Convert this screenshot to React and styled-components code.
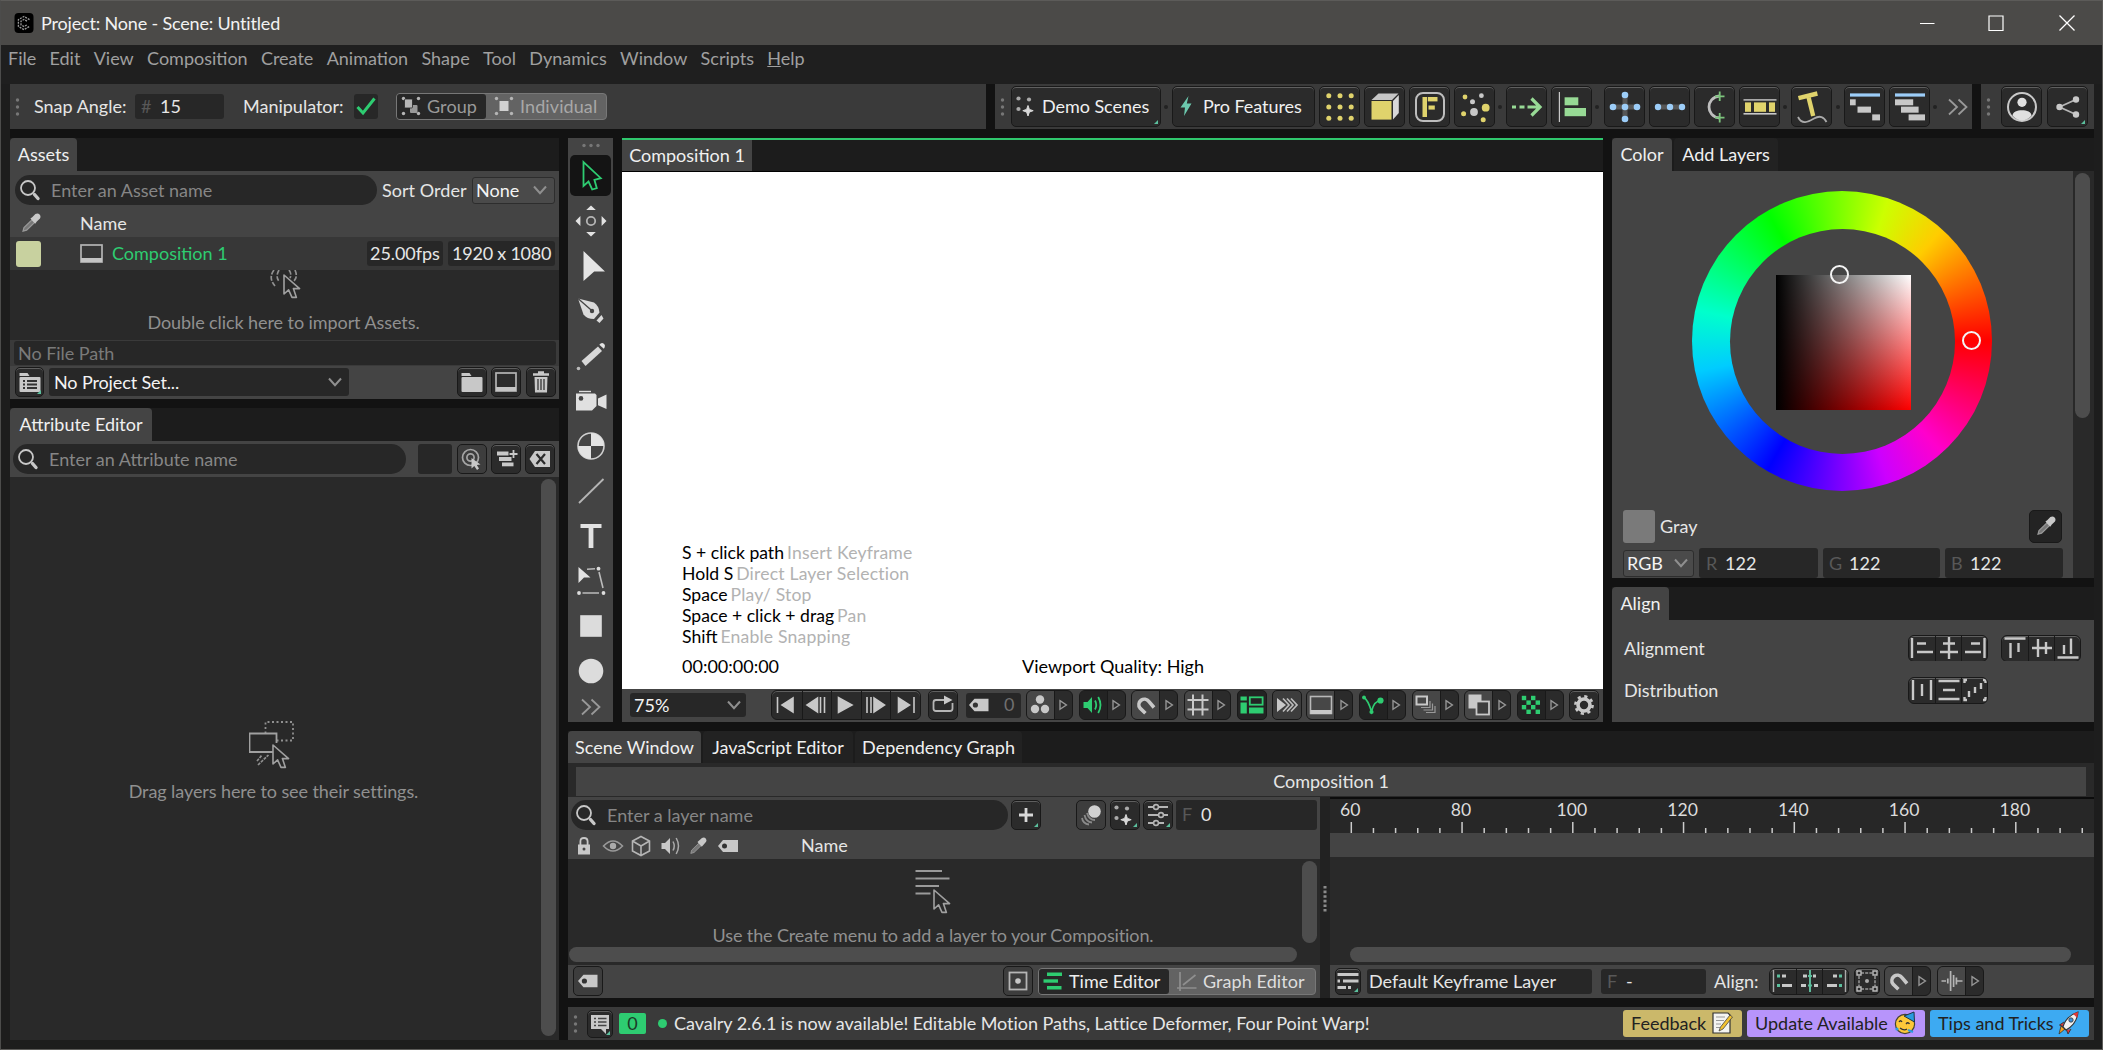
import React from "react";
import styled, { createGlobalStyle, css } from "styled-components";

const GlobalStyle = createGlobalStyle`
  * { box-sizing: border-box; }

  body {
    margin: 0;
    background: #1d1d1d;
    font-family: Lato, "Liberation Sans", sans-serif;
    font-size: 18px;
    line-height: 22px;
    color: #e6e6e6;
    overflow: hidden;
  }

  svg { display: block; flex: none; }
`;

/* ---------- frame ---------- */

const Window = styled.div`
  width: 2103px;
  height: 1050px;
  display: flex;
  flex-direction: column;
  background: #1d1d1d;
  border: 1px solid #5c5b59;
  border-left-color: #4c4c4b;
`;

const TitleBar = styled.header`
  height: 44px;
  flex: none;
  display: flex;
  align-items: center;
  padding: 0 26px 0 13px;
  background: #4b4a48;
`;

const MenuBar = styled.nav`
  height: 39px;
  flex: none;
  display: flex;
  gap: 13.3px;
  padding: 2px 0 0 7px;
  background: #1f1f1f;
  color: #a0a0a0;
`;

const Workspace = styled.main`
  width: 2084px;
  margin-left: 9px;
  height: 956px;
  display: flex;
  flex-direction: column;
  gap: 9px;
  background: #121212;
`;

const Columns = styled.div`
  display: flex;
  gap: 9px;
`;

const Stack = styled.div`
  width: ${p => p.$w}px;
  flex: none;
  display: flex;
  flex-direction: column;
  gap: ${p => p.$gap || 0}px;
`;

const Panel = styled.section`
  width: ${p => p.$w}px;
  height: ${p => p.$h}px;
  flex: none;
  display: flex;
  flex-direction: column;
  overflow: hidden;
  background: ${p => p.$bg || "#444"};
`;

const TabBar = styled.div`
  height: ${p => p.$h || 33}px;
  flex: none;
  display: flex;
  gap: 2px;
  background: #1c1c1c;
  border-top: ${p => (p.$accent ? "2px solid #2fc76d" : "none")};
`;

const Tab = styled.div`
  width: ${p => p.$w}px;
  padding-top: ${p => p.$pt ?? 5}px;
  text-align: center;
  white-space: nowrap;
  border-radius: ${p => (p.$square ? 0 : "4px 4px 0 0")};
  color: #f0f0f0;
  background: ${p => (p.$on ? "#444" : "#222")};
`;

const Bar = styled.div`
  height: ${p => p.$h}px;
  flex: none;
  display: flex;
  align-items: center;
  padding-left: ${p => p.$pl || 0}px;
  padding-bottom: ${p => p.$pb || 0}px;
  background: ${p => p.$bg || "#444"};
`;

/* ---------- controls ---------- */

const Label = styled.span`
  flex: none;
  width: ${p => (p.$w ? `${p.$w}px` : "auto")};
  margin-left: ${p => p.$ml || 0}px;
  padding-bottom: 1px;
  color: ${p => p.$c || "#e6e6e6"};
  letter-spacing: ${p => p.$ls || 0}px;
  white-space: nowrap;
`;

const Button = styled.div`
  position: relative;
  width: ${p => p.$w || 30}px;
  height: ${p => p.$h || 30}px;
  margin-left: ${p => p.$ml || 0}px;
  flex: none;
  display: flex;
  align-items: center;
  justify-content: center;
  border: 1px solid #191919;
  border-radius: 5px;
  background: ${p => (p.$flat ? "#3d3d3d" : p.$dark ? "#232323" : "#2b2b2b")};
  box-shadow: ${p => (p.$flat || p.$dark ? "none" : "inset 0 1px 0 #5f5f5f")};
  overflow: hidden;

  ${p =>
    p.$menu &&
    css`
      &:after {
        content: "";
        position: absolute;
        right: 2px;
        bottom: 2px;
        border: 2.5px solid transparent;
        border-right-color: #5bbf9d;
        border-bottom-color: #5bbf9d;
      }
    `}
`;

const TextButton = styled(Button)`
  justify-content: flex-start;
  padding: 0 0 1px 3px;
  color: #f0f0f0;
  gap: ${p => p.$gap || 4}px;
  letter-spacing: -0.05px;
  white-space: nowrap;
`;

const Joined = styled.div`
  height: ${p => p.$h || 30}px;
  margin-left: ${p => p.$ml || 0}px;
  flex: none;
  display: flex;
  border: 1px solid #191919;
  border-radius: 6px;
  background: #2b2b2b;
  box-shadow: ${p => (p.$lit ? "inset 0 1px 0 #5f5f5f" : "none")};
  overflow: hidden;
`;

const Cell = styled.div`
  width: ${p => p.$w}px;
  display: flex;
  align-items: center;
  justify-content: center;
  background: ${p => p.$bg || "transparent"};

  & + & { border-left: 1px solid #191919; }
`;

const Field = styled.div`
  width: ${p => p.$w}px;
  height: ${p => p.$h || 25}px;
  margin-left: ${p => p.$ml || 0}px;
  padding-left: ${p => p.$pl || 0}px;
  padding-bottom: 1px;
  flex: none;
  display: flex;
  align-items: center;
  border-radius: 3px;
  background: #272727;
  color: ${p => p.$c || "#e6e6e6"};
  letter-spacing: ${p => p.$ls || 0}px;
`;

const Hint = styled.span`
  width: ${p => p.$w || 19}px;
  color: #585858;
`;

const Combo = styled(Field)`
  justify-content: space-between;
  padding-right: ${p => p.$pr || 6}px;
  color: #f4f4f4;
  background: ${p => (p.$raised ? "#4a4a4a" : "#272727")};
  border: ${p => (p.$raised ? "1px solid #2d2d2d" : "none")};
`;

const Search = styled.div`
  width: ${p => p.$w}px;
  height: 30px;
  margin-left: ${p => p.$ml}px;
  flex: none;
  display: flex;
  align-items: center;
  gap: 10px;
  padding-left: 4px;
  border-radius: 15px;
  background: #272727;
  color: #868686;
`;

const Segmented = styled.div`
  width: ${p => p.$w}px;
  height: 27px;
  margin-left: ${p => p.$ml}px;
  flex: none;
  display: flex;
  border: 1px solid #777;
  border-radius: 4px;
  background: #636363;
`;

const Segment = styled.div`
  width: ${p => p.$w}px;
  display: flex;
  align-items: center;
  gap: 6px;
  padding-left: ${p => p.$pl || 4}px;
  padding-bottom: 1px;
  border-radius: 3px;
  letter-spacing: ${p => p.$ls || 0}px;
  white-space: nowrap;
  color: ${p => p.$c};
  background: ${p => (p.$on ? "#272727" : "transparent")};
`;

const Swatch = styled.div`
  width: ${p => p.$w}px;
  height: ${p => p.$h}px;
  flex: none;
  border-radius: 3px;
  background: ${p => p.$c};
`;

const Dot = styled.div`
  width: 4px;
  height: 4px;
  flex: none;
  margin-left: ${p => p.$ml ?? 3}px;
  margin-right: ${p => p.$mr ?? 4}px;
  border-radius: 2px;
  background: #222;
`;

const Chip = styled.div`
  width: ${p => p.$w}px;
  height: 27px;
  margin-left: ${p => p.$ml || 0}px;
  display: flex;
  align-items: center;
  justify-content: space-between;
  padding: 0 9px 1px 8px;
  border-radius: 3px;
  background: ${p => p.$c};
  color: #222;
  white-space: nowrap;
`;

const Thumb = styled.div`
  width: ${p => p.$w}px;
  height: ${p => p.$h}px;
  margin: ${p => p.$m || 0};
  flex: none;
  border-radius: 8px;
  background: #4d4d4d;
`;

const Empty = styled.div`
  height: ${p => p.$h}px;
  padding-top: ${p => p.$pt || 0}px;
  padding-right: ${p => p.$pr || 0}px;
  flex: 1;
  display: flex;
  flex-direction: column;
  align-items: center;
  gap: ${p => p.$gap}px;
  color: #909090;
  letter-spacing: ${p => p.$ls || -0.08}px;
  white-space: nowrap;
`;

/* ---------- icons, all drawn around 0,0 ---------- */

const Glyph = ({ w = 24, h = w, children, ...rest }) => (
  <svg
    width={w}
    height={h}
    viewBox={`${-w / 2} ${-h / 2} ${w} ${h}`}
    fill="none"
    {...rest}
  >
    {children}
  </svg>
);

const G = "#c8c8c8";
const Y = "#e0d36c";
const B = "#9ccdf8";
const GREEN = "#2ecc71";
const LIME = "#97da95";

const Rects = ({ list, fill = G }) =>
  list.map(([x1, y1, x2, y2], i) => (
    <rect key={i} x={x1} y={y1} width={x2 - x1} height={y2 - y1} fill={fill} />
  ));

const Dots = ({ list, fill = G }) =>
  list.map(([cx, cy, r], i) => (
    <circle key={i} cx={cx} cy={cy} r={r} fill={fill} />
  ));

const Grip = ({ across }) => (
  <Glyph w={across ? 22 : 5} h={across ? 5 : 22}>
    <Dots
      fill="#777"
      list={across ? [[-7, 0, 1.7], [0, 0, 1.7], [7, 0, 1.7]] : [[0, -7, 1.7], [0, 0, 1.7], [0, 7, 1.7]]}
    />
  </Glyph>
);

const Chevron = ({ c = "#8f8f8f" }) => (
  <Glyph w={16} h={12}>
    <path d="M-6 -3.5L0 3.2L6 -3.5" stroke={c} strokeWidth="2" />
  </Glyph>
);

const More = () => (
  <Glyph w={22} h={20}>
    <path d="M-9 -7.5L-1 0L-9 7.5M0.5 -7.5L8.5 0L0.5 7.5" stroke="#999" strokeWidth="1.8" />
  </Glyph>
);

const Lens = () => (
  <Glyph w={22}>
    <circle cx="-2" cy="-2" r="7" stroke={G} strokeWidth="1.8" />
    <path d="M4.5 4.5L8 8.5" stroke={G} strokeWidth="3.4" strokeLinecap="round" />
  </Glyph>
);

const Dropper = () => (
  <Glyph w={20}>
    <path d="M-8 8.2L-7 4.6L1 -3.2L3.6 -.6L-4.4 7.2Z" fill="#777" stroke="#999" strokeWidth="1.2" />
    <path d="M-.6 -4.4L1.2 -5.8L4.4 -9Q7 -10.2 8.6 -8.4T9 -4.6L5.8 -1.4L4.2 .8Z" fill={G} />
  </Glyph>
);

const Monitor = ({ w = 24, h = 20 }) => (
  <Glyph w={w} h={h}>
    <rect x={-w / 2 + 1} y={-h / 2 + 1} width={w - 2} height={h - 2} stroke="#b4b4b4" strokeWidth="1.7" />
    <rect x={-w / 2 + 1} y={h / 2 - 5} width={w - 2} height="4" fill="#c4c4c4" />
  </Glyph>
);

const Tag = ({ w = 22 }) => (
  <Glyph w={w} h={14}>
    <path d="M-10 0L-4.5 -6.3H9.5V6.3H-4.5Z" fill={G} />
    <circle cx="-3.6" cy="0" r="2.6" fill="#333" />
  </Glyph>
);

const Play = () => (
  <Glyph w={10} h={12}>
    <path d="M-3 -4.3L3.4 0L-3 4.3Z" stroke="#959595" strokeWidth="1.4" />
  </Glyph>
);

const Folder = ({ lined }) => (
  <Glyph w={24}>
    <path d="M-10.5 -9H-2.5L-.5 -6H-10.5Z" fill={G} />
    <rect x="-10.5" y="-5" width="21" height="15" rx="1" fill={G} />
    {lined && (
      <path d="M-7 -1H-5M-3 -1H7M-7 2.5H-5M-3 2.5H7M-7 6H-5M-3 6H7" stroke="#333" strokeWidth="1.8" />
    )}
  </Glyph>
);

const Sparkles = () => (
  <Glyph w={24}>
    <Dots list={[[-8.5, -7.5, 2.1], [2, -6.5, 2.1], [-8.5, 3, 2.1]]} fill="#aaa" />
    <path d="M1 -.5L2.4 3.4L6.2 4.7L2.4 6L1 10L-.4 6L-4.2 4.7L-.4 3.4Z" fill="#d8d8d8" stroke="#d8d8d8" />
  </Glyph>
);

const Cursor = ({ c = "#a0a0a0", sw = 1.6 }) => (
  <path
    d="M0 0V19L4.6 14.8L8 22.4H12.4L9.4 13.6H15.6Z"
    stroke={c}
    strokeWidth={sw}
    fill="#292929"
    strokeLinejoin="round"
  />
);

const AppLogo = () => (
  <Glyph w={20}>
    <rect x="-9.5" y="-10" width="19" height="20" rx="4" fill="#000" />
    <path d="M5.5 -3.4L0 -6.6L-5.6 -3.4V3.4L0 6.6L5.5 3.4M3 -1.9L0 -3.5L-3 -1.8V1.8L0 3.5L3 1.9" stroke="#9a9a9a" strokeWidth="1.3" strokeDasharray="2 1" />
  </Glyph>
);

const GroupIcon = ({ single }) => (
  <Glyph w={20}>
    <Dots fill="#b5b5b5" list={[[-7.5, -7.5, 1.7], [7.5, -7.5, 1.7], [-7.5, 7.5, 1.7], [7.5, 7.5, 1.7]]} />
    {single ? (
      <Rects fill="#d0d0d0" list={[[-4.5, -5, 4.5, 5]]} />
    ) : (
      <>
        <rect x="-1" y="-1" width="7.5" height="8" rx="1" fill="#999" />
        <rect x="-6.5" y="-7" width="8" height="9" rx="1" fill="#b5b5b5" stroke="#272727" strokeWidth=".8" />
      </>
    )}
  </Glyph>
);

/* main toolbar drawings */
const toolbarIcons = {
  grid: (
    <Dots
      fill={Y}
      list={[-11.2, 0, 11.2].flatMap(x => [-11.2, 0, 11.2].map(y => [x, y, 2.5]))}
    />
  ),
  cube: (
    <>
      <path d="M-13.5 -7L-6.5 -13.5H13.5L7 -7Z" fill="#c6c6c6" />
      <path d="M8 -6L13.8 -12V6L8 12.6Z" fill="#d8d8d8" />
      <Rects fill={Y} list={[[-13.5, -6, 6.5, 12.6]]} />
    </>
  ),
  frame: (
    <>
      <rect x="-14" y="-14" width="28" height="28" rx="7" stroke="#bdbdbd" strokeWidth="2" />
      <Rects fill={Y} list={[[-7.5, -10, -3, 10], [-2.2, -10, 7.5, -5.6], [-1.5, -1.5, 4.8, 2.6]]} />
    </>
  ),
  particles: (
    <>
      <Dots fill={Y} list={[[-10, -10, 2.4], [10.7, 0.7, 3.9], [-11.4, 6.7, 2.5], [8.2, 12.7, 2.5]]} />
      <Dots list={[[6.4, -11.3, 2.4], [-2.5, -5.3, 2.5], [-1, 5, 3.9]]} />
    </>
  ),
  arrow: (
    <path d="M-15 0H-11M-7.5 0H-2.5M.5 0H13M4.5 -8.5L13 0L4.5 8.5" stroke={LIME} strokeWidth="3.2" />
  ),
  align: (
    <>
      <Rects list={[[-13.2, -15, -12, 15]]} />
      <Rects fill={LIME} list={[[-7.4, -9.7, 6.3, -1.7], [-7.4, 1, 14, 9.2]]} />
    </>
  ),
  cross: (
    <>
      <Rects fill="#565656" list={[[-12, -2.5, 12, 2.5], [-2.5, -12, 2.5, 12]]} />
      <Dots fill={B} list={[[-12, 0, 3.3], [0, 0, 3.3], [12, 0, 3.3], [0, -12, 3.3], [0, 12, 3.3]]} />
    </>
  ),
  row: (
    <>
      <Rects fill="#565656" list={[[-12, -2.5, 12, 2.5]]} />
      <Dots fill={B} list={[[-12, 0, 3.2], [0, 0, 3.2], [12, 0, 3.2]]} />
    </>
  ),
  arc: (
    <>
      <path d="M4.5 -11C-9.5 -9.5 -9.5 9.5 4.5 11" stroke="#bdbdbd" strokeWidth="2.8" />
      <path d="M4.7 -15.5V-6M0 -10.7H9.5M4.7 15.5V6M0 10.7H9.5" stroke="#7cc47c" strokeWidth="1.8" />
    </>
  ),
  film: (
    <>
      <Rects list={[[-16.5, -7.8, 16.5, -6.4], [-16.5, 6, 16.5, 7.6]]} />
      <Rects fill={Y} list={[[-15, -4.6, -9, 4.8], [-6, -4.6, 6, 4.8], [9, -4.6, 15, 4.8]]} />
    </>
  ),
  textPath: (
    <>
      <g transform="rotate(-14)">
        <Rects fill={Y} list={[[-11, -14, 8.5, -9.6], [-3.2, -10, 1.2, 9]]} />
      </g>
      <path d="M-14 10C-10 18 -4 15 2 11.5S12 10 14.5 15" stroke="#aaa" strokeWidth="1.8" />
    </>
  ),
  stagger: (
    <>
      <Rects fill={B} list={[[-15, -13.6, 15, -10.4]]} />
      <Rects list={[[-15, -7.7, -9.3, -1.7], [-7.5, -.4, 6, 5.7], [7.2, 7.4, 15, 13.4]]} />
    </>
  ),
  cascade: (
    <>
      <Rects fill={B} list={[[-15, -13.6, 15, -10.4]]} />
      <Rects list={[[-15, -7.7, 3.2, -1.7], [-9, -.4, 8.6, 5.7], [-1.4, 7.4, 15, 13.4]]} />
    </>
  ),
  person: (
    <>
      <circle r="14" stroke={G} strokeWidth="2" />
      <circle cy="-4.7" r="4.6" fill="#e0e0e0" />
      <path d="M-9.5 8.7C-9.5 1.5 9.5 1.5 9.5 8.7Q5 13.5 0 13.5T-9.5 8.7Z" fill="#e0e0e0" />
    </>
  ),
  share: (
    <>
      <path d="M8 -7.5L-8.5 0L8 7.5" stroke="#b5b5b5" strokeWidth="1.8" />
      <Dots list={[[8, -7.5, 3.2], [-8.5, 0, 3.2], [8, 7.5, 3.2]]} />
    </>
  )
};

const ToolbarButton = ({ name, ml, menu }) => (
  <Button $w={41} $h={41} $ml={ml} $menu={menu}>
    <Glyph w={38}>{toolbarIcons[name]}</Glyph>
  </Button>
);

/* left strip of drawing tools */
const toolIcons = [
  <path d="M-7.5 -14V10L-2.5 5.5L1.2 13.5L5.8 12.2L3.4 3.8L9.8 2.2Z" stroke={GREEN} strokeWidth="1.8" />,
  <>
    <circle r="4.2" stroke="#b5b5b5" strokeWidth="1.8" />
    <path d="M0 -15.5L4.8 -11H-4.8ZM0 15.5L4.8 11H-4.8ZM-15.5 0L-10.6 -5V5ZM15.5 0L10.6 -5V5Z" fill="#e2e2e2" />
  </>,
  <path d="M-7.5 -15L14 5.5H3.2L-7.5 15Z" fill="#e4e4e4" />,
  <>
    <path d="M-13 -12.5L3 -8.5Q8 -5 8.5 1.5L3 8Q-4 8 -7.5 3.5Z" fill="#dadada" />
    <path d="M-13 -12.5L1 -.2" stroke="#444" strokeWidth="1.3" />
    <circle cx="1" cy="0" r="2.2" fill="#444" />
    <path d="M5.5 9.5L10.5 4L12.5 7.5L8.5 12Z" fill="#dadada" />
  </>,
  <>
    <path d="M-9.5 5L7 -9.5L11 -5L-5.5 10Z" fill="#d8d8d8" />
    <path d="M8.3 -11.2Q10.5 -14 12.8 -12.3T12.8 -7.2Z" fill="#e4e4e4" />
    <circle cx="-12.5" cy="12.5" r="1.8" fill="#bbb" />
  </>,
  <>
    <Rects fill="#ddd" list={[[-12, -10.2, 0, -8.8]]} />
    <path d="M-15 -7.5H4L5.5 -6V5L1 9.5H-15ZM7 -2.5L15.5 -6.5V8L7 4.2Z" fill="#e0e0e0" />
    <circle cx="-10" cy="-2.6" r="2.3" fill="#444" />
  </>,
  <>
    <circle r="13" stroke="#cfcfcf" strokeWidth="1.6" />
    <path d="M0 0V-13A13 13 0 0 1 13 0ZM0 0V13A13 13 0 0 1 -13 0Z" fill="#e2e2e2" />
  </>,
  <path d="M-12 12L12.5 -12" stroke="#b5b5b5" strokeWidth="1.8" />,
  <Rects fill="#e2e2e2" list={[[-10.5, -12, 10.5, -8], [-2.4, -9, 2.4, 12]]} />,
  <>
    <path d="M-12.5 -14L-.5 -3.5H-7L-12.5 2Z" fill="#e2e2e2" />
    <path d="M-4 -11.8L4 -12.3M8 -9L12 7M-8.5 12H8" stroke="#bbb" strokeWidth="1.6" />
    <Dots fill="#ddd" list={[[7.5, -12.3, 1.9], [-12, 12, 1.9], [12.5, 12, 1.9]]} />
  </>,
  <Rects fill="#dcdcdc" list={[[-10.8, -10.8, 10.8, 10.8]]} />,
  <circle r="12.3" fill="#dcdcdc" />
];

const Strip = styled(Panel)`
  align-items: center;
  padding-top: 5px;
`;

const Tools = styled.div`
  display: flex;
  flex-direction: column;
  align-items: center;
  gap: 4px;
  margin-top: 7px;
`;

const ToolSlot = styled.div`
  width: 41px;
  height: ${p => p.$h || 41}px;
  flex: none;
  display: flex;
  align-items: center;
  justify-content: center;
  border-radius: 5px;
  background: ${p => (p.$on ? "#141414" : "transparent")};
`;

/* ---------- viewport ---------- */

const Canvas = styled.div`
  height: 518px;
  flex: none;
  display: flex;
  flex-direction: column;
  justify-content: flex-end;
  padding: 0 0 12px 60px;
  border-top: 1px solid #000;
  background: #fff;
  color: #000;
  line-height: 21px;
`;

const Shortcut = styled.div`
  font-size: 17.6px;

  span {
    margin-left: 3px;
    color: #b2b2b2;
    letter-spacing: 0.18px;
  }
`;

const CanvasFooter = styled.div`
  display: flex;
  margin-top: 9px;

  & > :first-child { width: 340px; }
`;

const shortcuts = [
  ["S + click path", "Insert Keyframe"],
  ["Hold S", "Direct Layer Selection"],
  ["Space", "Play/ Stop"],
  ["Space + click + drag", "Pan"],
  ["Shift", "Enable Snapping"]
];

const transport = [
  "M-9.5 -8V8M6 -7V7L-5 0Z",
  "M7.5 -8V8M3.5 -8V8M.5 -7V7L-10 0Z",
  "M-7.5 -7.5V7.5L6 0Z",
  "M-9 -8V8M-5 -8V8M-2 -7V7L8.5 0Z",
  "M8 -8V8M-7.5 -7V7L3.5 0Z"
];

const viewIcons = {
  balls: <Dots list={[[0, -5.5, 4.2], [-5, 4, 4.2], [5, 4, 4.2]]} />,
  volume: (
    <>
      <path d="M-9.5 -3H-5.5L-1 -8V8L-5.5 3H-9.5Z" fill={GREEN} />
      <path d="M2 -4.5Q4.5 0 2 4.5M5.2 -8Q9.8 0 5.2 8" stroke={GREEN} strokeWidth="1.8" />
    </>
  ),
  magnet: <path d="M8 2.5L2.8 -3.6A5.4 5.4 0 0 0 -6 3L-.6 8.2" stroke={G} strokeWidth="3.6" />,
  grid: <path d="M-5 -10.5V10.5M4.5 -10.5V10.5M-10.5 -5H10.5M-10.5 4.5H10.5" stroke={G} strokeWidth="2" />,
  monitor: (
    <>
      <rect x="-10.5" y="-8.5" width="21" height="17" stroke="#b8b8b8" strokeWidth="1.6" />
      <Rects list={[[-10.5, 5, 10.5, 9]]} />
    </>
  ),
  path: (
    <>
      <path d="M-9 -7.5Q-5 -5 -1.5 6.5Q1 -4.5 9 -5" stroke={GREEN} strokeWidth="1.7" />
      <Dots fill={GREEN} list={[[-9, -7.5, 1.9], [7.5, -4.5, 3.1], [-1.5, 7, 2.1]]} />
    </>
  ),
  layers: (
    <>
      <rect x="-9.5" y="-8.5" width="10.5" height="8" stroke={G} strokeWidth="2" />
      <path d="M4 -4V2.5H-5M6.5 -1.5V5H-2.5M9 1V7.5H0" stroke="#999" strokeWidth="1.2" />
    </>
  ),
  overlap: (
    <>
      <Rects list={[[-10.5, -10.5, 2.5, 3.5]]} />
      <rect x="-2.5" y="-3.5" width="12.5" height="13" fill="#3d3d3d" stroke={G} strokeWidth="1.8" />
    </>
  ),
  checker: (
    <Rects
      fill={GREEN}
      list={[0, 1, 2, 3].flatMap(r =>
        [0, 1, 2, 3].filter(c => (r + c) % 2 === 0).map(c => [c * 4.6 - 9.2, r * 4.6 - 9.2, c * 4.6 - 4.8, r * 4.6 - 4.8])
      )}
    />
  ),
  wave: <path d="M-10.5 0H-6M-4.2 -2.5V2.5M-1.4 -10V10M1.6 -6V6M4.4 -3.5V3.5M5 0H10.5" stroke="#b5b5b5" strokeWidth="1.7" />
};

const Split = ({ icon, ml = 5.6, dark }) => (
  <Joined $ml={ml}>
    <Cell $w={27} $bg={dark ? "#232323" : "#474747"}>
      <Glyph w={24}>{viewIcons[icon]}</Glyph>
    </Cell>
    <Cell $w={18}>
      <Play />
    </Cell>
  </Joined>
);

/* ---------- colour wheel ---------- */

const hues = Array.from({ length: 16 }, (_, i) => `hsl(${360 - i * 24}, 100%, 50%)`);

const WheelArea = styled.div`
  height: 320px;
  padding: 20px 0 0 80px;
`;

const Wheel = styled.div`
  position: relative;
  width: 300px;
  height: 300px;
  display: grid;
  place-items: center;
  border-radius: 50%;
  background: conic-gradient(from 90deg, ${hues.join(", ")});
`;

const WheelHole = styled.div`
  width: 225px;
  height: 225px;
  display: grid;
  place-items: center;
  padding: 2px 0 0 2px;
  border-radius: 50%;
  background: #444;
`;

const ValueSquare = styled.div`
  width: 135px;
  height: 135px;
  background: linear-gradient(to right, #000, transparent), linear-gradient(#fff, #f00);
`;

const Marker = styled.div`
  position: absolute;
  left: ${p => p.$x}px;
  top: ${p => p.$y}px;
  width: 19px;
  height: 19px;
  border: 2px solid #f4f4f4;
  border-radius: 50%;
`;

const alignGlyphs = [
  "M-10 -10V10M-5 -4.5H4M-5 4H11",
  "M0 -11V11M-6 -4.5H6M-9 4H9",
  "M9.5 -10V10M-4 -4.5H5M-10 4H6"
];
const alignGlyphsV = [
  "M-10.5 -9.5H10.5M-4.5 -5V10M3.5 -5V4",
  "M-10 0H10M-4 -9V9M4 -6V6",
  "M-10.5 9.5H10.5M3 -9.5V6M-4 -3V6"
];

const AlignGroup = ({ glyphs, ml }) => (
  <Joined $h={27} $ml={ml} $lit>
    {glyphs.map((d, i) => (
      <Cell key={i} $w={26}>
        <Glyph w={24}>
          <path d={d} stroke={G} strokeWidth="2.4" />
        </Glyph>
      </Cell>
    ))}
  </Joined>
);

/* ---------- timeline ---------- */

const Ruler = styled.div`
  height: 36px;
  flex: none;
  background: #272727;
  border-top: 2px solid #0c0c0c;
`;

const Splitter = styled.div`
  width: 10px;
  display: flex;
  align-items: center;
  justify-content: center;
  padding-top: 2px;
  background: #222;
`;

const TimelineRuler = () => (
  <svg width="764" height="34" viewBox="0 0 764 34">
    {Array.from({ length: 34 }, (_, i) => {
      const x = 21.3 + i * 22.15;
      const major = i % 5 === 0;
      return (
        <React.Fragment key={i}>
          <path d={`M${x} ${major ? 23 : 29}V35`} stroke="#ccc" strokeWidth="1.5" />
          {major && i < 31 && (
            <text x={x - 1} y="16.5" fill="#dcdcdc" fontSize="17.6" textAnchor="middle">
              {60 + i * 4}
            </text>
          )}
        </React.Fragment>
      );
    })}
  </svg>
);

const Badge = styled.div`
  width: 27px;
  height: 21px;
  margin-left: 6px;
  text-align: center;
  line-height: 20px;
  border-radius: 2px;
  background: #2ecc71;
  color: #1c3a28;
`;

const Bullet = styled.div`
  width: 9px;
  height: 9px;
  margin-left: 12px;
  border-radius: 50%;
  background: #2ecc71;
`;

const Right = styled.div`
  margin-left: auto;
  padding-right: ${p => p.$pr || 0}px;
  display: flex;
  align-items: center;
`;

/* ---------- sections ---------- */

const menus = ["File", "Edit", "View", "Composition", "Create", "Animation", "Shape", "Tool", "Dynamics", "Window", "Scripts"];

const TopBar = () => (
  <>
    <TitleBar>
      <AppLogo />
      <Label $ml={7} $ls={-0.17} $c="#f2f2f2">Project: None - Scene: Untitled</Label>
      <Right>
        <Glyph w={160} h={20}>
          <path d="M-76 .5H-61.5M-7 -7H7V7.5H-7Z" stroke="#fff" strokeWidth="1.2" />
          <path d="M63.5 -7.5L78.5 7.5M78.5 -7.5L63.5 7.5" stroke="#fff" strokeWidth="1.3" />
        </Glyph>
      </Right>
    </TitleBar>
    <MenuBar>
      {menus.map(m => (
        <span key={m}>{m}</span>
      ))}
      <span><u>H</u>elp</span>
    </MenuBar>
  </>
);

const ToolRow = () => (
  <Columns>
    <Panel $w={976} $h={45} $bg="#3a3a3a">
      <Bar $h={45} $pl={5} $bg="#3a3a3a">
        <Grip />
        <Label $ml={14} $w={101}>Snap Angle:</Label>
        <Field $w={89} $pl={6}>
          <Hint>#</Hint>15
        </Field>
        <Label $ml={19} $w={111}>Manipulator:</Label>
        <Field $w={24}>
          <Glyph w={24}>
            <path d="M-8.5 1L-3 7L8.5 -7.5" stroke={GREEN} strokeWidth="3" />
          </Glyph>
        </Field>
        <Segmented $ml={18} $w={211}>
          <Segment $w={89} $on $c="#9a9a9a" $ls={0.1}><GroupIcon />Group</Segment>
          <Segment $pl={8} $c="#a8a8a8" $ls={0.1}><GroupIcon single />Individual</Segment>
        </Segmented>
      </Bar>
    </Panel>
    <Panel $w={977} $h={45} $bg="#3a3a3a">
      <Bar $h={45} $pl={5} $bg="#3a3a3a">
        <Grip />
        <TextButton $w={150} $h={41} $ml={6} $menu $gap={3}><Sparkles />Demo Scenes</TextButton>
        <Dot />
        <TextButton $w={143} $h={41} $gap={7}>
          <Glyph w={20} h={24}>
            <path d="M2.5 -10L-5.5 1.5H-1L-2 10L5.5 -2.5H.8Z" fill="#6cc9ae" />
          </Glyph>
          Pro Features
        </TextButton>
        <ToolbarButton name="grid" ml={4} />
        <ToolbarButton name="cube" ml={4} />
        <ToolbarButton name="frame" ml={4} />
        <ToolbarButton name="particles" ml={4} />
        <Dot />
        <ToolbarButton name="arrow" />
        <ToolbarButton name="align" ml={4} />
        <Dot />
        <ToolbarButton name="cross" ml={1} />
        <ToolbarButton name="row" ml={4} />
        <ToolbarButton name="arc" ml={4} />
        <ToolbarButton name="film" ml={4} />
        <Dot />
        <ToolbarButton name="textPath" />
        <Dot $ml={4} />
        <ToolbarButton name="stagger" />
        <ToolbarButton name="cascade" ml={4} />
        <Dot $mr={10} />
        <More />
      </Bar>
    </Panel>
    <Panel $w={113} $h={45} $bg="#3a3a3a">
      <Bar $h={45} $pl={5} $bg="#3a3a3a">
        <Grip />
        <ToolbarButton name="person" ml={10} />
        <ToolbarButton name="share" ml={5} menu />
      </Bar>
    </Panel>
  </Columns>
);

const Assets = () => (
  <Panel $w={549} $h={261}>
    <TabBar>
      <Tab $w={67} $on>Assets</Tab>
    </TabBar>
    <Bar $h={38}>
      <Search $w={362} $ml={5}><Lens />Enter an Asset name</Search>
      <Label $ml={5} $w={90} $ls={0.05}>Sort Order</Label>
      <Combo $w={83} $h={27} $pl={3} $raised>None<Chevron /></Combo>
    </Bar>
    <Bar $h={28} $pl={11}>
      <Dropper />
      <Label $ml={39}>Name</Label>
    </Bar>
    <Bar $h={33} $pl={6} $bg="#373737">
      <Swatch $w={25} $h={26} $c="#c8d19f" />
      <Label $ml={39}><Monitor w={23} h={19} /></Label>
      <Label $ml={9} $w={255} $c={GREEN}>Composition 1</Label>
      <Field $w={76} $pl={3} $ls={-0.05}>25.00fps</Field>
      <Field $w={107} $pl={4} $ml={5} $ls={-0.22}>1920 x 1080</Field>
    </Bar>
    <Bar $h={70} $bg="#292929">
      <Empty $h={70} $gap={9} $pr={2}>
        <Glyph w={44} h={32}>
          <path d="M-10 -16Q-16 -8 -9 0M-5 -16Q-9 -9 -4.5 -4M5 -16Q8 -12 6 -8M11 -16Q14 -9 10 -5" stroke="#909090" strokeWidth="1.7" strokeDasharray="5 1.5" />
          <g transform="translate(0 -11)"><Cursor /></g>
        </Glyph>
        Double click here to import Assets.
      </Empty>
    </Bar>
    <Bar $h={26} $pl={4} $bg="#3a3a3a">
      <Field $w={542} $h={24} $pl={4} $c="#7a7a7a" $ls={-0.05}>No File Path</Field>
    </Bar>
    <Bar $h={33} $pl={5} $pb={1}>
      <Button $w={29} $menu><Folder lined /></Button>
      <Combo $w={300} $h={28} $ml={5} $pl={5} $ls={-0.12}>No Project Set...<Chevron /></Combo>
      <Button $ml={108}><Folder /></Button>
      <Button $ml={4}><Monitor w={22} h={20} /></Button>
      <Button $ml={5}>
        <Glyph w={24}>
          <path d="M-8 -7.5H8M-3 -9.5H3" stroke={G} strokeWidth="2.4" />
          <path d="M-6.5 -5H6.5L6 10.5H-6Z" fill={G} />
          <path d="M-3 -3V8M0 -3V8M3 -3V8" stroke="#333" strokeWidth="1.3" />
        </Glyph>
      </Button>
    </Bar>
  </Panel>
);

const AttributeEditor = () => (
  <Panel $w={549} $h={632} $bg="#292929">
    <TabBar>
      <Tab $w={142} $on>Attribute Editor</Tab>
    </TabBar>
    <Bar $h={36}>
      <Search $w={393} $ml={3}><Lens />Enter an Attribute name</Search>
      <Field $w={34} $h={30} $ml={12} />
      <Button $ml={5} $flat>
        <Glyph w={24}>
          <circle cx="-1.5" cy="-1.5" r="8" stroke="#a5a5a5" strokeWidth="1.7" />
          <circle cx="-1.5" cy="-1.5" r="3.6" stroke="#a5a5a5" strokeWidth="1.7" />
          <path d="M-.5 -1V9.5L2.3 7L5 11L7 9.5L4.8 6L8.5 5.5Z" fill={G} />
        </Glyph>
      </Button>
      <Button $ml={4}>
        <Glyph w={24}>
          <Rects list={[[-9, -7.5, 2.5, -3.5], [-7, -2, 5.5, 2], [-4, 3.5, 7.5, 7.3]]} />
          <path d="M7.5 -9V-1M3.5 -5H11.5" stroke={G} strokeWidth="1.8" />
        </Glyph>
      </Button>
      <Button $ml={4}>
        <Glyph w={24}>
          <path d="M-10.5 0L-5 -8H10V8H-5Z" fill={G} />
          <path d="M-3.5 -5L5 5M5 -5L-3.5 5" stroke="#2b2b2b" strokeWidth="2.2" />
        </Glyph>
      </Button>
    </Bar>
    <Columns>
      <Empty $h={563} $pt={244} $gap={9} $pr={1}>
        <Glyph w={50} h={50}>
          <path d="M-8.5 -12.5V-24H19V-5.5H3" stroke="#909090" strokeWidth="1.8" strokeDasharray="2 2.5" />
          <path d="M0 6H-24.5V-12.5H2.5V-3" stroke="#a0a0a0" strokeWidth="1.8" />
          <path d="M-17 15L-12 9M-16 19L-5.5 9" stroke="#909090" strokeWidth="1.7" strokeDasharray="3 1" />
          <g transform="translate(-1 -1)"><Cursor /></g>
        </Glyph>
        Drag layers here to see their settings.
      </Empty>
      <Thumb $w={15} $h={557} $m="2px 3px 0 -6px" />
    </Columns>
  </Panel>
);

const Viewport = () => (
  <Panel $w={981} $h={584}>
    <TabBar $accent>
      <Tab $w={130} $on $square $pt={4}>Composition 1</Tab>
    </TabBar>
    <Canvas>
      {shortcuts.map(([keys, what]) => (
        <Shortcut key={keys}>{keys}<span>{what}</span></Shortcut>
      ))}
      <CanvasFooter>
        <div>00:00:00:00</div>
        <div>Viewport Quality: High</div>
      </CanvasFooter>
    </Canvas>
    <Bar $h={33} $pb={1}>
      <Combo $w={116} $h={24} $ml={8} $pl={4} $pr={4}>75%<Chevron /></Combo>
      <Joined $ml={25} $lit>
        {transport.map((d, i) => (
          <Cell key={i} $w={29.6}>
            <Glyph w={26}><path d={d} fill={G} stroke={G} strokeWidth="1.6" /></Glyph>
          </Cell>
        ))}
      </Joined>
      <Button $ml={7}>
        <Glyph w={24}>
          <path d="M2 -5H-7Q-9.5 -5 -9.5 -2.5V3.5Q-9.5 6 -7 6H7Q9.5 6 9.5 3.5V-2" stroke="#b5b5b5" strokeWidth="1.8" />
          <path d="M1 -9.5L9.5 -5L1 -.5Z" fill={G} />
        </Glyph>
      </Button>
      <Field $w={55} $ml={8} $pl={2}><Tag /><Label $ml={14} $c="#707070">0</Label></Field>
      <Split icon="balls" ml={5} />
      <Split icon="volume" dark />
      <Split icon="magnet" />
      <Split icon="grid" />
      <Button $ml={6} $dark>
        <Glyph w={26}>
          <Rects fill={GREEN} list={[[-11.5, -8.5, -5.2, -4.5], [-11.5, -2.5, -5.2, 8.5], [-3, 2.5, 11.5, 8.5]]} />
          <rect x="-2.2" y="-7.7" width="12.8" height="7.4" stroke={GREEN} strokeWidth="1.8" />
        </Glyph>
      </Button>
      <Button $ml={5} $flat>
        <Glyph w={24}>
          <path d="M-10 -7V7L-1 0Z" fill={G} />
          <path d="M-4 -6.5L2 0L-4 6.5M0 -6.5L6 0L0 6.5M4 -6.5L10 0L4 6.5" stroke="#bbb" strokeWidth="1.7" />
        </Glyph>
      </Button>
      <Split icon="monitor" ml={4.6} />
      <Split icon="path" dark />
      <Split icon="layers" />
      <Split icon="overlap" />
      <Split icon="checker" dark />
      <Button $ml={5}>
        <Glyph w={24}>
          <circle r="6" stroke={G} strokeWidth="3.6" />
          <circle r="8.6" stroke={G} strokeWidth="2.6" strokeDasharray="3.2 3.55" />
        </Glyph>
      </Button>
    </Bar>
  </Panel>
);

const ColorBody = styled.div`
  display: flex;
`;

const ChannelBar = styled(Bar)`
  margin-top: -13px;
`;

const ColorPanel = () => (
  <Panel $w={482} $h={440}>
    <TabBar>
      <Tab $w={60} $on>Color</Tab>
      <Tab $w={104}>Add Layers</Tab>
    </TabBar>
    <ColorBody>
      <Stack $w={461}>
        <WheelArea>
          <Wheel>
            <WheelHole><ValueSquare /></WheelHole>
            <Marker $x={138} $y={74} />
            <Marker $x={270} $y={140} />
          </Wheel>
        </WheelArea>
        <Bar $h={70} $pl={11}>
          <Swatch $w={32} $h={33} $c="#7a7a7a" />
          <Label $ml={5} $w={369}>Gray</Label>
          <Button $w={33} $h={33} $dark><Dropper /></Button>
        </Bar>
        <ChannelBar $h={30} $pl={11}>
          <Combo $w={71} $h={27} $pl={3} $pr={4} $raised>RGB<Chevron /></Combo>
          <Field $w={119} $h={30} $ml={5} $pl={7}><Hint>R</Hint>122</Field>
          <Field $w={117} $h={30} $ml={5} $pl={6}><Hint $w={20}>G</Hint>122</Field>
          <Field $w={118} $h={30} $ml={5} $pl={6}><Hint>B</Hint>122</Field>
        </ChannelBar>
      </Stack>
      <Panel $w={21} $h={407} $bg="#292929"><Thumb $w={15} $h={245} $m="2px" /></Panel>
    </ColorBody>
  </Panel>
);

const AlignPanel = () => (
  <Panel $w={482} $h={135}>
    <TabBar>
      <Tab $w={57} $on>Align</Tab>
    </TabBar>
    <Bar $h={15} />
    <Bar $h={26} $pl={12}>
      <Label $w={284}>Alignment</Label>
      <AlignGroup glyphs={alignGlyphs} />
      <AlignGroup glyphs={alignGlyphsV} ml={13} />
    </Bar>
    <Bar $h={16} />
    <Bar $h={26} $pl={12}>
      <Label $w={284}>Distribution</Label>
      <AlignGroup
        glyphs={[
          "M-9 -10V10M9 -10V10M0 -6V6",
          "M-10.5 -9H10.5M-10.5 9H10.5M-6 0H6",
          "M-10.5 -7V-10H-8M8 -10H10.5V-7M-10.5 7V10H-8M8 10H10.5V7M-6 1V7M0 -3V3M6 -7V-1"
        ]}
      />
    </Bar>
  </Panel>
);

const columnIcons = (
  <Glyph w={170} h={22}>
    <g transform="translate(-78 0)">
      <rect x="-6" y="-1.5" width="12" height="10" fill={G} />
      <path d="M-3.6 -1V-4.5Q-3.6 -8 0 -8T3.6 -4.5V-1" stroke={G} strokeWidth="1.8" />
      <circle cy="3" r="1.5" fill="#444" />
    </g>
    <g transform="translate(-49 0)">
      <path d="M-9.5 0Q0 -10 9.5 0Q0 10 -9.5 0Z" stroke="#999" strokeWidth="1.6" />
      <circle r="3.2" fill="#aaa" />
    </g>
    <path d="M-21 -9.5L-12.5 -5V5L-21 9.5L-29.5 5V-5ZM-21 0V9.5M-21 0L-29.5 -5M-21 0L-12.5 -5" stroke="#b5b5b5" strokeWidth="1.6" />
    <g transform="translate(9 0)">
      <path d="M-9.5 -3H-6L-1 -8V8L-6 3H-9.5Z" fill={G} />
      <path d="M2 -4.5Q4.5 0 2 4.5M5.2 -8Q9.8 0 5.2 8" stroke="#aaa" strokeWidth="1.5" />
    </g>
    <g transform="translate(36 0) scale(.9)">
      <path d="M-8 8.2L-7 4.6L1 -3.2L3.6 -.6L-4.4 7.2Z" fill="#777" stroke="#999" />
      <path d="M-.6 -4.4L4.4 -9Q7 -10.2 8.6 -8.4T9 -4.6L4.2 .8Z" fill={G} />
    </g>
    <path d="M56 0L61 -6H76V6H61Z" fill={G} />
    <circle cx="62.5" r="2.5" fill="#333" />
  </Glyph>
);

const ListBar = styled(Bar)`
  align-items: flex-start;
`;

const Layers = () => (
  <Stack $w={752}>
    <Bar $h={35}>
      <Search $w={437} $ml={3}><Lens />Enter a layer name</Search>
      <Button $ml={3} $menu>
        <Glyph w={20}><path d="M0 -7V7M-7 0H7" stroke="#d8d8d8" strokeWidth="2.8" /></Glyph>
      </Button>
      <Button $ml={35} $flat>
        <Glyph w={24}>
          <path d="M-9 3Q-8 9 -2 9.5M-6.5 0Q-5 7 1 7.5M-4 -2Q-2 5 4 5" stroke="#8a8a8a" strokeWidth="1.8" />
          <circle cx="3.5" cy="-3.5" r="6.3" fill="#d0d0d0" />
        </Glyph>
      </Button>
      <Button $ml={4} $menu><Sparkles /></Button>
      <Button $ml={3} $menu>
        <Glyph w={24}>
          <path d="M-10 -8H-5M1 -8H10M-10 0H0M6 0H10M-10 8H-5M1 8H6" stroke="#b5b5b5" strokeWidth="1.8" />
          <circle cx="-2" cy="-8" r="2.4" stroke="#b5b5b5" strokeWidth="1.6" />
          <circle cx="3" cy="0" r="2.4" stroke="#b5b5b5" strokeWidth="1.6" />
          <circle cx="-2" cy="8" r="2.4" stroke="#b5b5b5" strokeWidth="1.6" />
        </Glyph>
      </Button>
      <Field $w={141} $h={30} $ml={3} $pl={6}><Hint>F</Hint>0</Field>
    </Bar>
    <Bar $h={27} $pl={9}>
      {columnIcons}
      <Label $ml={54}>Name</Label>
    </Bar>
    <ListBar $h={86} $bg="#292929">
      <Empty $h={86} $pt={10} $gap={7} $pr={4} $ls={-0.12}>
        <Glyph w={36} h={48}>
          <path d="M-17.5 -22H9M-17.5 -7H6M-17.5 -14.5H16.5M-17.5 .5H-2.5" stroke="#9a9a9a" strokeWidth="1.8" />
          <g transform="translate(1 -3)"><Cursor /></g>
        </Glyph>
        Use the Create menu to add a layer to your Composition.
      </Empty>
      <Thumb $w={15} $h={82} $m="2px 3px 0 0" />
    </ListBar>
    <Bar $h={20} $bg="#292929" $pl={1} $pb={2}><Thumb $w={728} $h={15} /></Bar>
    <Bar $h={33} $pl={5} $pb={1}>
      <Button $flat><Tag /></Button>
      <Button $ml={400} $flat>
        <Glyph w={24}>
          <rect x="-8.5" y="-8.5" width="17" height="17" stroke="#b5b5b5" strokeWidth="1.8" />
          <circle r="2.8" fill={G} />
        </Glyph>
      </Button>
      <Segmented $ml={5} $w={278}>
        <Segment $w={130} $on $c="#eee">
          <Glyph w={20}><Rects fill={GREEN} list={[[-6, -8.5, 9, -5], [-9.5, -1.7, 5, 1.7], [-6, 5, 8.5, 8.5]]} /></Glyph>
          Time Editor
        </Segment>
        <Segment $pl={8} $c="#dedede" $ls={0.08}>
          <Glyph w={20}><path d="M-7 -9V10M-10 7H9.5M-4 4L8.5 -6" stroke="#8f8f8f" strokeWidth="1.7" /></Glyph>
          Graph Editor
        </Segment>
      </Segmented>
    </Bar>
  </Stack>
);

const keyAlign = [
  ["M-9.5 -11V11", "M-6 -5H-3M-6 4.5H-3", "M-1 -5H3M-1 4.5H9"],
  ["M0 -11V11", "M0 -11V11M-2 -5H2M-2 4.5H2", "M-7 -5H-3M3 -5H6M-9 4.5H-4M4 4.5H8"],
  ["M9.5 -11V11", "M3 -5H6M3 4.5H6", "M-3 -5H1M-9 4.5H1"]
];

const Timeline = () => (
  <Stack $w={764}>
    <Ruler><TimelineRuler /></Ruler>
    <Bar $h={24} />
    <Bar $h={88} $bg="#292929" />
    <Bar $h={20} $bg="#292929" $pl={20} $pb={2}><Thumb $w={721} $h={15} /></Bar>
    <Bar $h={33} $pl={5} $pb={1}>
      <Button $w={26} $h={27} $menu>
        <Glyph w={24}><path d="M-10.5 -6.5H10.5M-10.5 0H-8M-5 0H10.5M-10.5 6.5H-2M0 6.5H3" stroke={G} strokeWidth="2.8" /></Glyph>
      </Button>
      <Field $w={225} $ml={6} $pl={2}>Default Keyframe Layer</Field>
      <Field $w={105} $ml={9} $pl={6}><Hint>F</Hint>-</Field>
      <Label $ml={8} $w={55}>Align:</Label>
      <Joined $h={27} $lit>
        {keyAlign.map(([line, accent, bars], i) => (
          <Cell key={i} $w={26}>
            <Glyph w={24}>
              <path d={line} stroke="#aaa" strokeWidth="1.4" />
              <path d={bars} stroke={G} strokeWidth="3" />
              <path d={accent} stroke="#5bbf9d" strokeWidth={i === 1 ? 1.8 : 3} />
            </Glyph>
          </Cell>
        ))}
      </Joined>
      <Button $w={26} $h={27} $ml={5}>
        <Glyph w={24}>
          <path d="M-6 -8H6M-6 8H6M-8 -5V5M8 -5V5" stroke="#999" strokeWidth="1.5" strokeDasharray="3 1.2" />
          <path d="M-10 -10H-6V-6H-10ZM6 -10H10V-6H6ZM-10 6H-6V10H-10ZM6 6H10V10H6Z" stroke="#bbb" strokeWidth="1.4" />
          <circle r="2" fill="#aaa" />
        </Glyph>
      </Button>
      <Split icon="magnet" ml={4} />
      <Split icon="wave" ml={6} />
    </Bar>
  </Stack>
);

const StripTitle = styled.div`
  height: 29px;
  margin: 4px 8px 0;
  padding-top: 3px;
  flex: none;
  text-align: center;
  background: #444;
`;

const SceneBody = styled.div`
  display: flex;
  margin-top: 1px;
`;

const ScenePanel = () => (
  <Panel $w={1526} $h={267} $bg="#292929">
    <TabBar $h={32}>
      <Tab $w={133} $on>Scene Window</Tab>
      <Tab $w={150}>JavaScript Editor</Tab>
      <Tab $w={167}>Dependency Graph</Tab>
    </TabBar>
    <StripTitle>Composition 1</StripTitle>
    <SceneBody>
      <Layers />
      <Splitter>
        <Glyph w={4} h={28}>
          <path d="M0 -13V13" stroke="#8a8a8a" strokeWidth="3" strokeDasharray="2.6 2" />
        </Glyph>
      </Splitter>
      <Timeline />
    </SceneBody>
  </Panel>
);

const Memo = () => (
  <Glyph w={22} h={24}>
    <path d="M-9 -10H6L8 -8V10H-9Z" fill="#f4f4f0" stroke="#333" strokeWidth="1.2" />
    <path d="M-6 -6H3M-6 -2.5H2M-6 1H-1M-6 4.5H-2" stroke="#999" strokeWidth="1.2" />
    <path d="M-3 8L-1.5 4L8 -8L10.5 -6L1 6Z" fill="#f2c230" stroke="#444" strokeWidth=".8" />
  </Glyph>
);

const Party = () => (
  <Glyph w={22} h={24}>
    <circle cy="1" r="9.6" fill="#fcc83a" stroke="#443" strokeWidth="1.2" />
    <path d="M-1 -7L9 -11L9.5 -1Z" fill="#2a9be0" stroke="#234" strokeWidth="1" />
    <path d="M-6 -1Q-4.5 -3.5 -3 -1M1 1Q3 -1.5 4.5 1M-5 5Q-1 8 2 6" stroke="#333" strokeWidth="1.3" />
    <circle cx="-8" cy="6" r="1.6" fill="#2a9be0" />
    <path d="M3 7L8 9" stroke="#2a9be0" strokeWidth="2" />
  </Glyph>
);

const Rocket = () => (
  <Glyph w={22} h={24}>
    <path d="M-4 6L-10 11L-8 3Z" fill="#f7a21b" stroke="#333" strokeWidth=".8" />
    <path d="M-5 -1L-9.5 2L-6 3.5M2 6L-1 11L-2.5 7" fill="#e03a3a" stroke="#333" strokeWidth=".9" />
    <path d="M-6 4Q-3 -7 9 -11Q8 1 -3 7Z" fill="#f2f2f2" stroke="#333" strokeWidth="1.1" />
    <path d="M4 -9.2L9 -11L8.3 -5Z" fill="#e03a3a" />
    <circle cx="2" cy="-3" r="2.2" fill="#3d8fd8" stroke="#333" strokeWidth=".8" />
  </Glyph>
);

const StatusBar = () => (
  <Bar $h={33} $bg="#3a3a3a" $pl={5}>
    <Grip />
    <Button $w={26} $h={28} $ml={9} $menu>
      <Glyph w={22}>
        <path d="M-9 -9H9V5H6V10L1 5H-9Z" fill={G} />
        <path d="M-6 -5.5H-4M-2 -5.5H6.5M-6 -2H-4M-2 -2H6.5M-6 1.5H-4M-2 1.5H6.5" stroke="#444" strokeWidth="1.6" />
      </Glyph>
    </Button>
    <Badge>0</Badge>
    <Bullet />
    <Label $ml={7} $ls={-0.045}>
      Cavalry 2.6.1 is now available! Editable Motion Paths, Lattice Deformer, Four Point Warp!
    </Label>
    <Right $pr={5}>
      <Chip $w={119} $c="#cbb86a">Feedback<Memo /></Chip>
      <Chip $w={178} $ml={5} $c="#b794fb">Update Available<Party /></Chip>
      <Chip $w={159} $ml={5} $c="#3daaf2">Tips and Tricks<Rocket /></Chip>
    </Right>
  </Bar>
);

const App = () => (
  <>
    <GlobalStyle />
    <Window>
      <TopBar />
      <Workspace>
        <ToolRow />
        <Columns>
          <Stack $w={549} $gap={9}>
            <Assets />
            <AttributeEditor />
          </Stack>
          <Stack $w={1526} $gap={9}>
            <Columns>
              <Strip $w={45} $h={584}>
                <Grip across />
                <Tools>
                  {toolIcons.map((icon, i) => (
                    <ToolSlot key={i} $on={i === 0}>
                      <Glyph w={34}>{icon}</Glyph>
                    </ToolSlot>
                  ))}
                  <ToolSlot $h={24}><More /></ToolSlot>
                </Tools>
              </Strip>
              <Viewport />
              <Stack $w={482} $gap={9}>
                <ColorPanel />
                <AlignPanel />
              </Stack>
            </Columns>
            <ScenePanel />
            <StatusBar />
          </Stack>
        </Columns>
      </Workspace>
    </Window>
  </>
);

export default App;
